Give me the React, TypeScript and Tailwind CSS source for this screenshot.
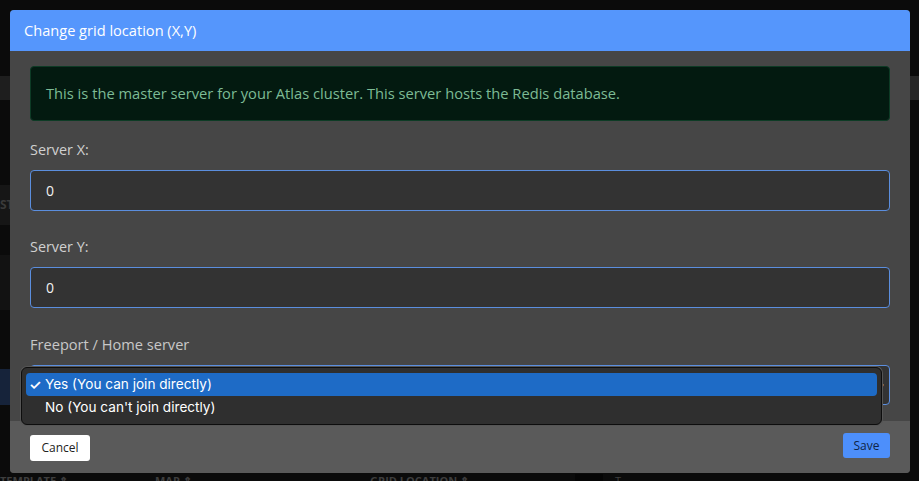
import React from 'react';

const sans = "font-['Open_Sans','Noto_Sans',sans-serif]";

function Field({ label, value }: { label: string; value: string }) {
  return (
    <div>
      <label className="block h-5 text-[14.4px] leading-5 text-[#d0d0d0]">{label}</label>
      <div className="mt-[10px] flex h-[41px] items-center rounded-[4px] border border-[#5b8ede] bg-[#333333] px-[15px] text-[14px] text-[#f2f2f2]">
        {value}
      </div>
    </div>
  );
}

export default function App() {
  return (
    <div className={`relative h-[481px] w-full overflow-hidden bg-[#0b0b0b] ${sans}`}>
      {/* dimmed page behind the modal */}
      <div className="absolute left-0 top-[76px] h-[24px] w-[10px] bg-[#1e1e1e]" />
      <div className="absolute left-[910px] top-[76px] h-[24px] w-[9px] bg-[#262626]" />
      <div className="absolute left-0 top-[185px] h-[40px] w-[10px] bg-[#161616] text-[12px] font-bold leading-[40px] text-[#3a3a3a]">ST</div>
      <div className="absolute left-0 top-[255px] h-[55px] w-[10px] bg-[#121212]" />
      <div className="absolute left-0 top-[369px] h-[36px] w-[10px] bg-[#16233a]" />
      <div className="absolute left-0 top-[474px] flex w-full text-[11px] font-bold uppercase leading-[14px] text-[#3e3e3e]">
        <span className="w-[155px]">Template ⇕</span>
        <span className="w-[215px]">Map ⇕</span>
        <span className="w-[205px]">Grid location ⇕</span>
        <span className="h-[10px] w-[28px] bg-[#050505]" />
        <span className="ml-[12px] font-normal normal-case">T</span>
      </div>

      {/* modal */}
      <div className="relative ml-[10px] mt-[10px] w-[900px] overflow-hidden rounded-[4px] bg-[#464646]">
        <div className="flex h-[41px] items-center bg-[#5596fc] px-[14px] text-[14.6px] text-white">
          Change grid location (X,Y)
        </div>

        <div className="px-[20px] pb-[16px] pt-[15px]">
          <div className="flex h-[55px] items-center rounded-[4px] border border-[#0d3b25] bg-[#031a10] px-[15px] text-[14.7px] text-[#7dbb95]">
            This is the master server for your Atlas cluster. This server hosts the Redis database.
          </div>

          <div className="mt-[19px]">
            <Field label="Server X:" value="0" />
          </div>
          <div className="mt-[26px]">
            <Field label="Server Y:" value="0" />
          </div>

          <div className="relative mt-[26px]">
            <label className="block h-5 text-[14.6px] leading-5 text-[#c8c8c8]">Freeport / Home server</label>
            <div className="mt-[11px] flex h-[40px] items-center justify-end rounded-[4px] border border-[#5b8ede] bg-[#333333] pr-[5px]">
              <span className="text-[9px] leading-none text-white">▾</span>
            </div>

            {/* open native option list */}
            <div className="absolute left-[-9px] top-[33px] z-10 w-[861px] rounded-[6px] border border-[#0d0d0d] bg-[#2f2f2f] px-[4px] py-[5px] font-['Inter','Liberation_Sans',sans-serif] text-[13.6px] text-white shadow-[0_0_0_1px_#555555]">
              <div className="flex h-[23px] items-center rounded-[4px] bg-[#1e6bc6]">
                <span className="w-[19px] pl-[3px] text-[14px] font-semibold">✓</span>
                <span>Yes (You can join directly)</span>
              </div>
              <div className="flex h-[23px] items-center">
                <span className="w-[19px]" />
                <span>No (You can't join directly)</span>
              </div>
            </div>
          </div>
        </div>

        <div className="flex h-[52px] items-center justify-between bg-[#5a5a5a] px-[20px]">
          <button className="mt-[2px] h-[26px] w-[60px] rounded-[3px] bg-white text-[12px] text-[#222]">Cancel</button>
          <button className="mb-[3px] h-[25px] w-[47px] rounded-[3px] bg-[#4d8ffb] text-[12px] text-[#0f2547]">Save</button>
        </div>
      </div>
    </div>
  );
}
